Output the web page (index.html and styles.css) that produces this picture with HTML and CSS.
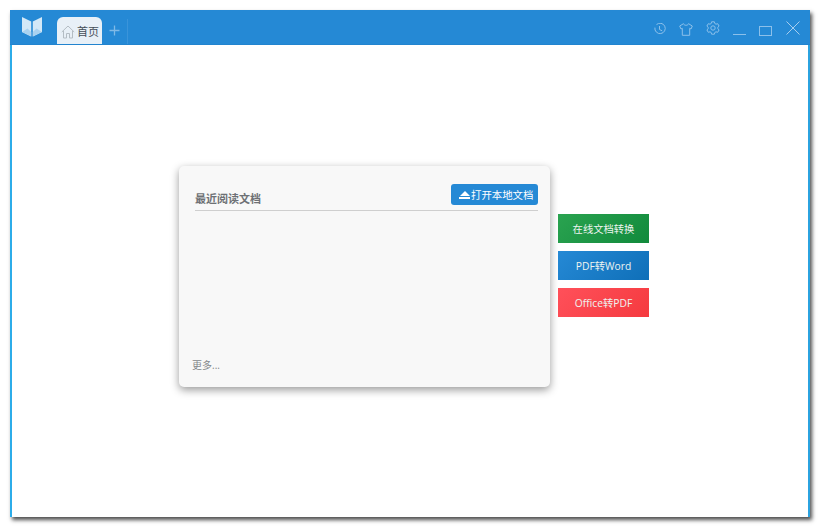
FILE: index.html
```html
<!DOCTYPE html>
<html lang="zh-CN">
<head>
<meta charset="utf-8">
<title>首页</title>
<link rel="stylesheet" href="styles.css">
</head>
<body>
<div class="window">
  <header class="titlebar">
    <svg class="logo" width="20" height="20" viewBox="0 0 20 20">
      <path d="M0 0 L9.2 4.5 V19.5 L0 15 Z" fill="#d3e8f7"/>
      <path d="M20 0 L10.8 4.5 V19.5 L20 15 Z" fill="#d3e8f7"/>
      <path d="M0 15 L5.5 11.5 L9.2 15 V19.5 Z M20 15 L14.5 11.5 L10.8 15 V19.5 Z" fill="#a9d2f0"/>
    </svg>
    <div class="tab">
      <svg class="tab-icon" width="14" height="14" viewBox="0 0 14 14" fill="none" stroke="#b4bdc4" stroke-width="1">
        <path d="M0.8 7 L7 1 L13.2 7 M2.5 6 V13 H5.5 V8.5 H8.5 V13 H11.5 V6"/>
      </svg>
      <span>首页</span>
    </div>
    <svg class="add" width="11" height="11" viewBox="0 0 11 11" stroke="#7fb9e6" stroke-width="1.3"><path d="M5.5 0.5 V10.5 M0.5 5.5 H10.5"/></svg>
    <div class="divider"></div>
    <div class="controls">
      <svg class="ctl-history" width="12" height="12" viewBox="0 0 12 12" fill="none" stroke="#8cc0ea"><path d="M2.5 1.6 A5.2 5.2 0 1 1 0.9 4.6 M5.5 3 V6.5 L8.2 7.8"/></svg>
      <svg class="ctl-shirt" width="14" height="13" viewBox="0 0 14 13" fill="none" stroke="#8cc0ea"><path d="M4.5 0.7 L0.7 3 L2 6 L3.3 5.3 V12.3 H10.7 V5.3 L12 6 L13.3 3 L9.5 0.7 C9 2.8 5 2.8 4.5 0.7 Z"/></svg>
      <svg class="ctl-gear" width="14" height="14" viewBox="0 0 14 14" fill="none" stroke="#8cc0ea"><path d="M5.6 0.8 H8.4 L8.8 2.5 L10 3.2 L11.7 2.7 L13.1 5.1 L11.8 6.3 V7.7 L13.1 8.9 L11.7 11.3 L10 10.8 L8.8 11.5 L8.4 13.2 H5.6 L5.2 11.5 L4 10.8 L2.3 11.3 L0.9 8.9 L2.2 7.7 V6.3 L0.9 5.1 L2.3 2.7 L4 3.2 L5.2 2.5 Z"/><circle cx="7" cy="7" r="2.2"/></svg>
      <svg class="ctl-min" width="13" height="13" viewBox="0 0 13 13" stroke="#8cc0ea"><path d="M0 12.5 H13"/></svg>
      <svg class="ctl-max" width="13" height="10" viewBox="0 0 13 10" fill="none" stroke="#8cc0ea"><rect x="0.5" y="0.5" width="12" height="9"/></svg>
      <svg class="ctl-close" width="14" height="14" viewBox="0 0 14 14" stroke="#a6cdee"><path d="M0.5 0.5 L13.5 13.5 M13.5 0.5 L0.5 13.5"/></svg>
    </div>
  </header>
  <main class="content">
    <section class="card">
      <div class="card-head">
        <h2 class="card-title">最近阅读文档</h2>
        <button class="open-btn"><span class="eject"><i class="eject-tri"></i><i class="eject-bar"></i></span>打开本地文档</button>
      </div>
      <div class="card-body"></div>
      <a class="more">更多...</a>
    </section>
    <nav class="side">
      <a class="side-btn green">在线文档转换</a>
      <a class="side-btn blue">PDF转Word</a>
      <a class="side-btn red">Office转PDF</a>
    </nav>
  </main>
</div>
</body>
</html>
```
FILE: styles.css
```css
html, body {
  margin: 0;
  height: 100%;
  background: #fff;
  overflow: hidden;
}
body {
  box-sizing: border-box;
  padding: 10px 11px 10px 10px;
  font-family: "Open Sans", "Noto Sans CJK SC", sans-serif;
}
.window {
  box-sizing: border-box;
  height: 507px;
  display: flex;
  flex-direction: column;
  border-left: 2px solid #2cace9;
  border-right: 2px solid #2ba3e0;
  background: #fff;
  box-shadow: 2px 3px 4px rgba(0, 0, 0, 0.7);
}
.titlebar {
  flex: none;
  height: 35px;
  margin: 0 -2px;
  display: flex;
  align-items: flex-end;
  background: #2589d5;
  border-bottom: 1px solid #2284cf;
  box-sizing: border-box;
}
.logo {
  align-self: flex-start;
  margin: 7px 0 0 12px;
}
.tab {
  box-sizing: border-box;
  width: 45px;
  height: 27px;
  margin-left: 15px;
  padding: 0 0 0 4px;
  display: flex;
  align-items: center;
  gap: 2px;
  background: #e8f0f7;
  border-radius: 6px 6px 0 0;
  font-size: 11px;
  color: #454e57;
}
.tab-icon {
  flex: none;
  margin-top: 2px;
}
.add {
  align-self: flex-start;
  margin: 15px 0 0 7px;
}
.divider {
  width: 1px;
  height: 25px;
  margin-left: 7px;
  background: #3a94da;
}
.controls {
  margin-left: auto;
  align-self: flex-start;
  display: flex;
  align-items: flex-start;
}
.ctl-history { margin: 13px 0 0 0; }
.ctl-shirt { margin: 13px 0 0 13px; }
.ctl-gear { margin: 11px 0 0 13px; }
.ctl-min { margin: 12px 0 0 13px; }
.ctl-max { margin: 16px 0 0 13px; }
.ctl-close { margin: 11px 10px 0 14px; }
.content {
  flex: 1;
  display: flex;
  align-items: flex-start;
  gap: 8px;
  padding: 121px 0 0 167px;
}
.card {
  box-sizing: border-box;
  width: 371px;
  height: 221px;
  padding: 18px 12px 14px 13px;
  display: flex;
  flex-direction: column;
  background: #f8f8f8;
  border-radius: 5px;
  box-shadow: 0 3px 8px rgba(0, 0, 0, 0.4);
}
.card-head {
  display: flex;
  justify-content: space-between;
  align-items: flex-end;
  margin-left: 3px;
  height: 21px;
  border-bottom: 1px solid #cfcfcf;
  padding-bottom: 5px;
}
.card-title {
  margin: 0 0 -2px;
  font-size: 11px;
  font-weight: 700;
  line-height: 16px;
  color: #6e7175;
}
.open-btn {
  box-sizing: border-box;
  width: 87px;
  height: 21px;
  padding: 0 0 0 8px;
  display: flex;
  align-items: center;
  gap: 1px;
  border: 0;
  border-radius: 3px;
  background: #2589d5;
  color: #fff;
  font: 10.4px "Open Sans", "Noto Sans CJK SC", sans-serif;
  white-space: nowrap;
}
.eject {
  display: flex;
  flex-direction: column;
  align-items: center;
  gap: 1px;
}
.eject-tri {
  width: 0;
  height: 0;
  border-left: 5.5px solid transparent;
  border-right: 5.5px solid transparent;
  border-bottom: 5px solid #fff;
}
.eject-bar {
  width: 11px;
  height: 2px;
  background: #fff;
}
.card-body {
  flex: 1;
}
.more {
  font-size: 10px;
  line-height: 16px;
  color: #85888b;
}
.side {
  margin-top: 48px;
  display: flex;
  flex-direction: column;
  gap: 8px;
}
.side-btn {
  width: 91px;
  height: 29px;
  display: flex;
  align-items: center;
  justify-content: center;
  font-size: 10.3px;
  color: #eef4f0;
}
.green { background: linear-gradient(135deg, #2aa350, #118a3c); }
.blue { background: linear-gradient(135deg, #2589d5, #0f6fb8); }
.red { background: linear-gradient(135deg, #ff505a, #f53a3f); }
```
